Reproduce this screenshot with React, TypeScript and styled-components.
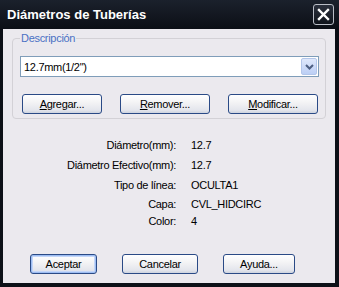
import React from 'react';
import styled, { createGlobalStyle, css } from 'styled-components';

const GlobalStyle = createGlobalStyle`
  html, body {
    margin: 0;
    padding: 0;
    background: #0d1118;
  }
  * {
    box-sizing: border-box;
  }
`;

const info = [
  { label: 'Diámetro(mm):', value: '12.7' },
  { label: 'Diámetro Efectivo(mm):', value: '12.7' },
  { label: 'Tipo de línea:', value: 'OCULTA1' },
  { label: 'Capa:', value: 'CVL_HIDCIRC' },
  { label: 'Color:', value: '4' },
];

const Window = styled.div`
  width: 339px;
  height: 287px;
  display: flex;
  flex-direction: column;
  background: linear-gradient(#1b212c, #0b0e15 30px, #0d1118);
  padding: 0 4px 4px 3px;
  font-family: Tahoma, "Liberation Sans", Arial, sans-serif;
  font-size: 11px;
  letter-spacing: -0.3px;
  color: #000;
`;

const TitleBar = styled.div`
  height: 29px;
  display: flex;
  align-items: center;
  justify-content: space-between;
  padding: 0 1px 0 4px;
`;

const Title = styled.span`
  color: #fff;
  font-weight: bold;
  font-size: 13px;
  letter-spacing: 0;
`;

const CloseButton = styled.button`
  width: 21px;
  height: 21px;
  padding: 0;
  border: 1px solid #b9bdc6;
  border-radius: 3px;
  background: linear-gradient(#2a303c, #10141c);
  display: flex;
  align-items: center;
  justify-content: center;
`;

const Body = styled.div`
  flex: 1;
  display: flex;
  flex-direction: column;
  background: #ebe9ee;
  padding: 9px 9px 9px 9px;
`;

const Group = styled.div`
  border: 1px solid #d3d1d6;
  border-radius: 4px;
  padding: 0 6px 4px 7px;
`;

const Legend = styled.span`
  display: block;
  width: fit-content;
  margin: -7px 0 0 0;
  padding: 0 1px;
  line-height: 13px;
  background: #ebe9ee;
  color: #4a71c4;
`;

const Select = styled.div`
  margin-top: 11px;
  height: 21px;
  display: flex;
  align-items: center;
  background: #fff;
  border: 1px solid #7f9db9;
  padding: 1px 1px 1px 3px;
`;

const SelectText = styled.span`
  flex: 1;
`;

const DropButton = styled.span`
  width: 16px;
  height: 17px;
  display: flex;
  align-items: center;
  justify-content: center;
  border: 1px solid #b3c6ea;
  border-radius: 2px;
  background: linear-gradient(#dfe8fb, #bccff5);
`;

const ButtonRow = styled.div<{ $gap: number; $indent?: number }>`
  display: flex;
  gap: ${p => p.$gap}px;
  padding-left: ${p => p.$indent ?? 0}px;
`;

const TopButtons = styled(ButtonRow)`
  margin-top: 17px;
`;

const Footer = styled(ButtonRow)`
  margin-top: auto;
`;

const Button = styled.button<{ $w: number; $default?: boolean }>`
  width: ${p => p.$w}px;
  height: 20px;
  padding: 0;
  font: inherit;
  letter-spacing: inherit;
  color: #000;
  border: 1px solid #2a4a86;
  border-radius: 3px;
  background: linear-gradient(#ffffff, #f2f2f4 45%, #e3e5ec 85%, #cdd3df);
  ${p => p.$default && css`
    box-shadow: inset 0 0 0 1px #9dbdf2, inset 0 0 0 2px #c4d6f8;
  `}
  u {
    text-decoration: underline;
  }
`;

const InfoGrid = styled.div`
  margin-top: 20px;
  display: grid;
  grid-template-columns: 164px auto;
  grid-template-rows: 20px 20px 19px 17px 13px;
  column-gap: 15px;
  line-height: 13px;
`;

const InfoLabel = styled.span`
  text-align: right;
`;

const InfoValue = styled.span``;

export default function App() {
  return (
    <>
      <GlobalStyle />
      <Window>
        <TitleBar>
          <Title>Diámetros de Tuberías</Title>
          <CloseButton aria-label="Cerrar">
            <svg width="13" height="13" viewBox="0 0 13 13">
              <path d="M2 2 L11 11 M11 2 L2 11" stroke="#fff" strokeWidth="2.4" strokeLinecap="square" />
            </svg>
          </CloseButton>
        </TitleBar>
        <Body>
          <Group>
            <Legend>Descripción</Legend>
            <Select>
              <SelectText>12.7mm(1/2")</SelectText>
              <DropButton>
                <svg width="9" height="6" viewBox="0 0 9 6">
                  <path d="M1 1 L4.5 4.5 L8 1" fill="none" stroke="#4d5f82" strokeWidth="2" />
                </svg>
              </DropButton>
            </Select>
            <TopButtons $gap={18} $indent={2}>
              <Button $w={80}><u>A</u>gregar...</Button>
              <Button $w={90}><u>R</u>emover...</Button>
              <Button $w={90}><u>M</u>odificar...</Button>
            </TopButtons>
          </Group>
          <InfoGrid>
            {info.map(row => (
              <React.Fragment key={row.label}>
                <InfoLabel>{row.label}</InfoLabel>
                <InfoValue>{row.value}</InfoValue>
              </React.Fragment>
            ))}
          </InfoGrid>
          <Footer $gap={25} $indent={18}>
            <Button $w={67} $default>Aceptar</Button>
            <Button $w={76}>Cancelar</Button>
            <Button $w={72}>Ayuda...</Button>
          </Footer>
        </Body>
      </Window>
    </>
  );
}
